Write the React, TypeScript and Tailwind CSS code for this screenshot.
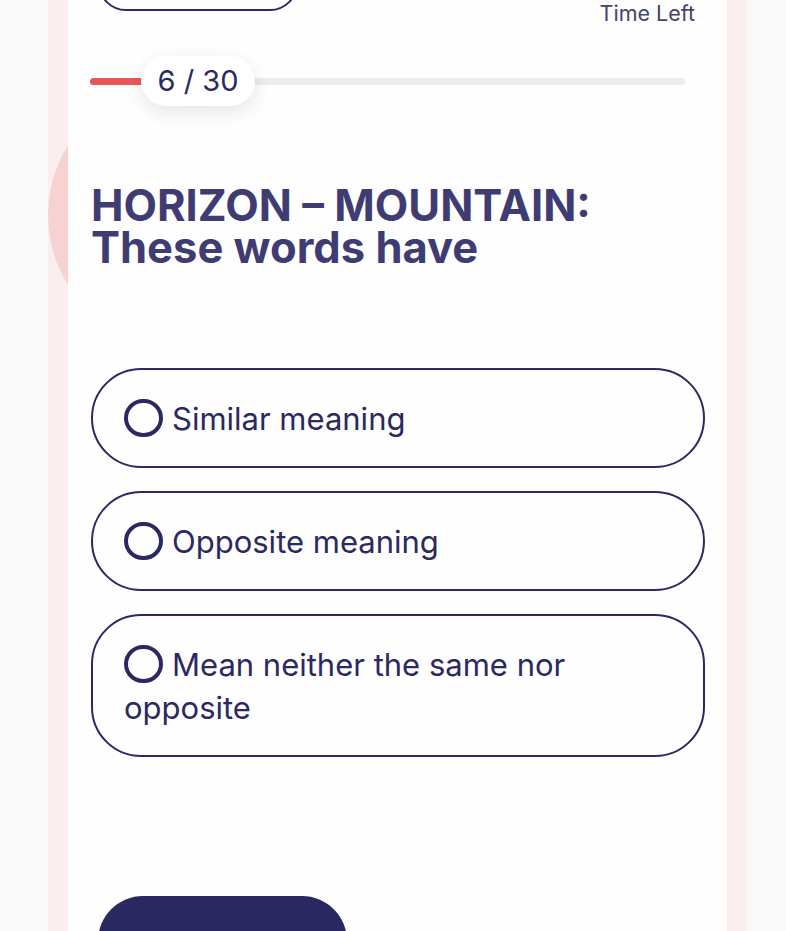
import React from "react";

const font = { fontFamily: "Inter, 'Noto Sans', sans-serif" };

function Radio() {
  return (
    <span className="inline-block align-[-7px] mr-[9px] w-[39px] h-[38px] rounded-full border-[4px] border-[#2b2960] box-border" />
  );
}

function Option({ label }: { label: string }) {
  return (
    <div className="rounded-[50px] border-2 border-[#2b2960] pl-[31px] pr-[32px] pt-[27px] pb-[26px] text-[31px] leading-[43px] text-[#2b2960]">
      <Radio />
      {label}
    </div>
  );
}

export default function App() {
  const progress = 6 / 30;
  return (
    <div className="h-[931px] overflow-hidden bg-[#f9f9fa] pl-[48px] pr-[39px]" style={font}>
      <div className="relative h-full overflow-hidden bg-[#fbeeef] px-[20px]">
        <div className="absolute left-0 top-[83px] w-[264px] h-[264px] rounded-full bg-[#f6d2d3]" />
        <div className="relative h-full bg-[#fefefe]">
          <div className="flex items-start justify-between h-[26px]">
            <div className="ml-[30px] -mt-[45px] w-[200px] h-[56px] shrink-0 rounded-[30px] border-2 border-[#2b2960]" />
            <div className="mr-[32px] text-[21.5px] leading-[26px] text-[#45436b]">Time Left</div>
          </div>
          <div className="relative mt-[30px] ml-[22px] mr-[42px] h-[50px] flex items-center">
            <div className="w-full h-[7px] rounded-full bg-[#ececec]">
              <div className="h-full rounded-full bg-[#e85757]" style={{ width: `${progress * 50}%` }} />
            </div>
            <div className="absolute left-[51px] top-0 h-[50px] w-[114px] rounded-full bg-white shadow-[0_6px_18px_rgba(0,0,0,0.10)] flex items-center justify-center text-[29px] text-[#2b2960]">
              6 / 30
            </div>
          </div>
          <h1 className="mt-[78px] ml-[23px] text-[43.5px] leading-[42px] font-bold text-[#3e3c73]">
            HORIZON – MOUNTAIN:
            <br />
            These words have
          </h1>
          <div className="mt-[100px] ml-[23px] mr-[22px] flex flex-col gap-[23px]">
            <Option label="Similar meaning" />
            <Option label="Opposite meaning" />
            <Option label="Mean neither the same nor opposite" />
          </div>
          <div className="mt-[139px] ml-[30px] w-[249px] h-[90px] rounded-[50px] bg-[#2a2860] pt-[28px] text-center text-[26px] font-semibold text-white">
            Next
          </div>
        </div>
      </div>
    </div>
  );
}
